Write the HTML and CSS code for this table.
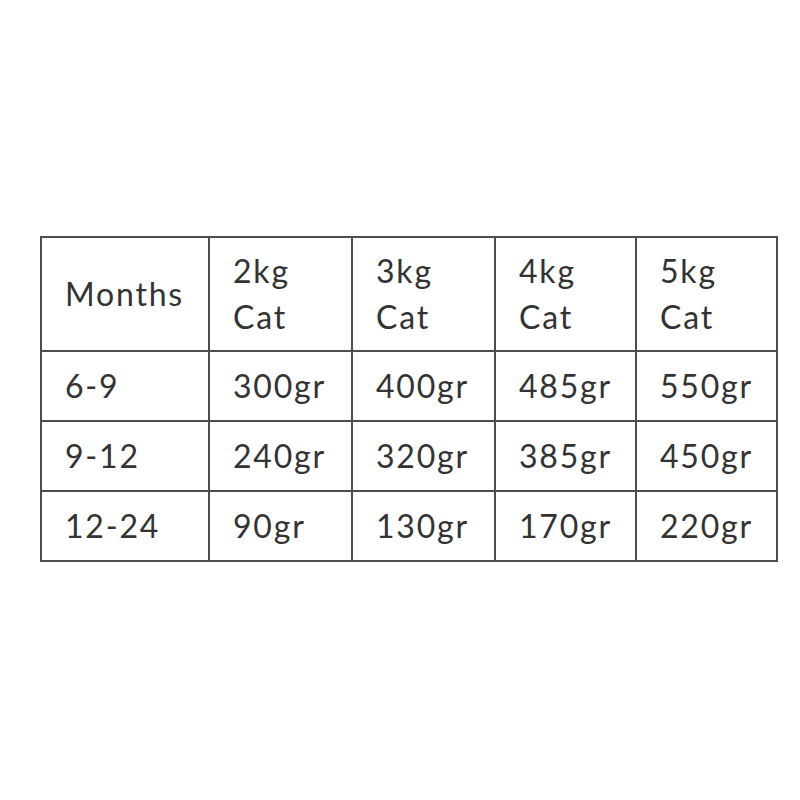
FILE: index.html
```html
<!DOCTYPE html>
<html>
<head>
<meta charset="utf-8">
<link rel="stylesheet" href="styles.css">
</head>
<body>
<table class="feed">
  <colgroup>
    <col class="c1"><col class="c2"><col class="c2"><col class="c3"><col class="c3">
  </colgroup>
  <tr class="head">
    <td>Months</td><td>2kg<br>Cat</td><td>3kg<br>Cat</td><td>4kg<br>Cat</td><td>5kg<br>Cat</td>
  </tr>
  <tr class="row">
    <td>6-9</td><td>300gr</td><td>400gr</td><td>485gr</td><td>550gr</td>
  </tr>
  <tr class="row">
    <td>9-12</td><td>240gr</td><td>320gr</td><td>385gr</td><td>450gr</td>
  </tr>
  <tr class="row">
    <td>12-24</td><td>90gr</td><td>130gr</td><td>170gr</td><td>220gr</td>
  </tr>
</table>
</body>
</html>
```
FILE: styles.css
```css
html, body {
  margin: 0;
  padding: 0;
  background: #ffffff;
}
body {
  padding-top: 236px;
  padding-left: 40px;
  font-family: Lato, "Open Sans", sans-serif;
}
.feed {
  border-collapse: collapse;
  table-layout: fixed;
  width: 736px;
  color: #333333;
  font-size: 32px;
  line-height: 46px;
  letter-spacing: 1.8px;
}
.c1 { width: 168px; }
.c2 { width: 143px; }
.c3 { width: 141px; }
.feed td {
  border: 2px solid #4d4d4d;
  padding: 0 0 0 23px;
  vertical-align: middle;
  box-sizing: border-box;
}
.head td { height: 114px; }
.row td { height: 70px; }
```
